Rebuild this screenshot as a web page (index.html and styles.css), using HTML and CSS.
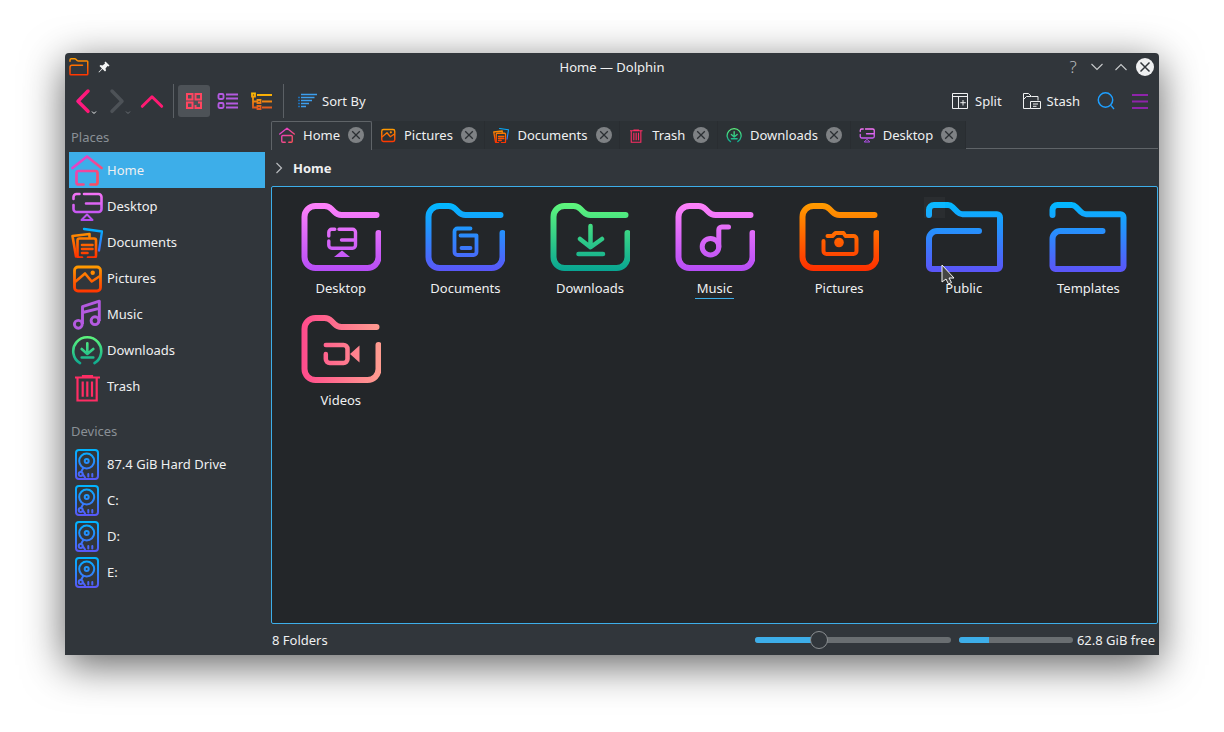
FILE: index.html
```html
<!DOCTYPE html>
<html lang="en">
<head>
<meta charset="utf-8">
<title>Home — Dolphin</title>
<link rel="stylesheet" href="styles.css">
</head>
<body>
<svg class="defs" xmlns="http://www.w3.org/2000/svg">
  <defs>
    <linearGradient id="fPink" gradientUnits="userSpaceOnUse" x1="0" y1="0" x2="0" y2="68"><stop offset="0" stop-color="#ff82fa"/><stop offset="1" stop-color="#b64df6"/></linearGradient>
    <linearGradient id="fBlue" gradientUnits="userSpaceOnUse" x1="0" y1="0" x2="0" y2="68"><stop offset="0" stop-color="#00baff"/><stop offset="1" stop-color="#5a56f8"/></linearGradient>
    <linearGradient id="fGreen" gradientUnits="userSpaceOnUse" x1="0" y1="0" x2="0" y2="68"><stop offset="0" stop-color="#5ff77c"/><stop offset="1" stop-color="#08a592"/></linearGradient>
    <linearGradient id="fOrange" gradientUnits="userSpaceOnUse" x1="0" y1="0" x2="0" y2="68"><stop offset="0" stop-color="#ff9c00"/><stop offset="1" stop-color="#ff2e00"/></linearGradient>
    <linearGradient id="fRose" gradientUnits="userSpaceOnUse" x1="0" y1="0" x2="80" y2="0"><stop offset="0" stop-color="#ff4b8c"/><stop offset="1" stop-color="#ff9d90"/></linearGradient>
    <linearGradient id="sHome" gradientUnits="userSpaceOnUse" x1="2" y1="4" x2="30" y2="30"><stop offset="0" stop-color="#e03fe0"/><stop offset="1" stop-color="#ff5050"/></linearGradient>
    <linearGradient id="sPink" gradientUnits="userSpaceOnUse" x1="0" y1="3" x2="0" y2="31"><stop offset="0" stop-color="#f573f5"/><stop offset="1" stop-color="#b24df0"/></linearGradient>
    <linearGradient id="sBlue" gradientUnits="userSpaceOnUse" x1="0" y1="2" x2="0" y2="32"><stop offset="0" stop-color="#00b4ff"/><stop offset="1" stop-color="#5a56f8"/></linearGradient>
    <linearGradient id="sOrange" gradientUnits="userSpaceOnUse" x1="0" y1="4" x2="0" y2="32"><stop offset="0" stop-color="#ff9c00"/><stop offset="1" stop-color="#ff2e00"/></linearGradient>
    <linearGradient id="sGreen" gradientUnits="userSpaceOnUse" x1="0" y1="2" x2="0" y2="32"><stop offset="0" stop-color="#5ff77c"/><stop offset="1" stop-color="#08a592"/></linearGradient>
    <linearGradient id="tOrange" gradientUnits="userSpaceOnUse" x1="0" y1="0" x2="0" y2="72"><stop offset="0" stop-color="#ff9c00"/><stop offset="1" stop-color="#ff2e00"/></linearGradient>
    <linearGradient id="tTree" gradientUnits="userSpaceOnUse" x1="0" y1="0" x2="0" y2="16"><stop offset="0" stop-color="#ffc400"/><stop offset="1" stop-color="#e2571e"/></linearGradient>
    <linearGradient id="tBack" gradientUnits="userSpaceOnUse" x1="0" y1="0" x2="28" y2="0"><stop offset="0" stop-color="#ff1f8f"/><stop offset="1" stop-color="#ff0f60"/></linearGradient>

    <path id="fold" d="M77 30V54a11 11 0 0 1-11 11H14A11 11 0 0 1 3 54V14A11 11 0 0 1 14 3h9c3 0 5 1 7 3l3 3c2 2 4 3 7 3h35"/>
    <path id="pub" d="M3 13V8a5 5 0 0 1 5-5H22c2 0 3 .5 4.500 2l5 5c1.500 1.500 3 2.200 5 2.200H71a3 3 0 0 1 3 3V64a3 3 0 0 1-3 3H6a3 3 0 0 1-3-3V37a8 8 0 0 1 8-8H53"/>

    <symbol id="i-home" viewBox="0 0 32 32">
      <path fill="none" stroke="url(#sHome)" stroke-width="2.700" stroke-linecap="round" stroke-linejoin="round" d="M1.500 14L16 2.500 30.500 14M5.500 19v9.500a2 2 0 0 0 2 2h5M5.500 19a2 2 0 0 1 2-2h17a2 2 0 0 1 2 2v9.500a2 2 0 0 1-2 2h-5"/>
    </symbol>
    <symbol id="i-desktop" viewBox="0 0 32 32">
      <path fill="none" stroke="url(#sPink)" stroke-width="2.600" stroke-linecap="round" d="M2.500 9V7a3 3 0 0 1 3-3h3M13 4H27.500a3 3 0 0 1 3 3V19a3 3 0 0 1-3 3H5.500a3 3 0 0 1-3-3V15M30 13.500H15"/>
      <path fill="none" stroke="url(#sPink)" stroke-width="2" stroke-linejoin="round" d="M16 24.500l-5.500 5.500h11z"/>
    </symbol>
    <symbol id="i-docs" viewBox="0 0 32 32">
      <path fill="none" stroke="url(#sBlue)" stroke-width="2.300" stroke-linecap="round" stroke-linejoin="round" d="M13 3l18 2.500-3 19"/>
      <path fill="none" stroke="url(#sOrange)" stroke-width="2.600" stroke-linecap="round" stroke-linejoin="round" d="M18.500 11V8L1.500 10l3.500 20.500"/>
      <path fill="none" stroke="url(#sOrange)" stroke-width="2.600" stroke-linecap="round" stroke-linejoin="round" d="M11 31.500H8.500a2 2 0 0 1-2-2V14.500a2 2 0 0 1 2-2H23a2 2 0 0 1 2 2V29.500a2 2 0 0 1-2 2H17M11 19H21.500M11 23H21.500M11 27H16.500"/>
    </symbol>
    <symbol id="i-pics" viewBox="0 0 32 32">
      <rect x="3.500" y="5" width="26" height="24" rx="3.500" fill="none" stroke="url(#sOrange)" stroke-width="2.800"/>
      <path fill="none" stroke="url(#sOrange)" stroke-width="2.600" stroke-linejoin="round" d="M4 20l10-8.500 6.700 8 8.300-5.500"/>
      <circle cx="21.700" cy="10.700" r="2.200" fill="#ff8a00"/>
    </symbol>
    <symbol id="i-music" viewBox="0 0 32 32">
      <g fill="none" stroke="#b45ae0" stroke-width="2.900" stroke-linejoin="round">
        <circle cx="7.300" cy="26.300" r="3.900"/><circle cx="24" cy="22.700" r="3.900"/>
        <path d="M11.500 26V8.700L28.300 3.200V23M11.500 14.500l16.800-4.200"/>
      </g>
    </symbol>
    <symbol id="i-down" viewBox="0 0 32 32">
      <path fill="none" stroke="url(#sGreen)" stroke-width="2.600" stroke-linecap="round" stroke-linejoin="round" d="M9 29.200A14 14 0 1 1 23.500 29.200M16.300 9.300V20M10.700 15l5.600 5 6-5M10.700 23.500H22.300"/>
    </symbol>
    <symbol id="i-trash" viewBox="0 0 32 32">
      <path fill="none" stroke="#ff2d64" stroke-width="2.200" d="M4 7.500H29M12 7.500V6h9v1.500M6.500 7.500V30.500H25.700V7.500M11.700 11.500V26.700M16.300 11.500V26.700M21 11.500V26.700"/>
    </symbol>
    <symbol id="i-hdd" viewBox="0 0 32 32">
      <g fill="none" stroke="url(#sBlue)" stroke-width="2" stroke-linecap="round">
        <path d="M8 2H24a3 3 0 0 1 3 3V28a3 3 0 0 1-3 3H8a3 3 0 0 1-3-3V5a3 3 0 0 1 3-3z"/>
        <circle cx="15.700" cy="13" r="7.500"/>
        <circle cx="15.700" cy="13" r="2"/>
        <circle cx="9.700" cy="26" r="2"/>
        <path d="M10 24l2-3.500M12 26.500l2 3M17.300 26v2.500M21.300 26v2.500"/>
      </g>
    </symbol>
    <symbol id="i-x" viewBox="0 0 16 16">
      <circle cx="8" cy="8" r="8" fill="#7e8184"/>
      <path d="M4.200 4.200l7.600 7.600M11.800 4.200l-7.600 7.600" stroke="#2b2f33" stroke-width="1.300"/>
    </symbol>
  </defs>
</svg>

<div class="window">
  <header class="titlebar">
    <div class="tb-left">
      <svg class="t-folder" width="20" height="18" viewBox="0 0 78 72"><use href="#pub" fill="none" stroke="url(#tOrange)" stroke-width="6" stroke-linecap="round" stroke-linejoin="round"/></svg>
      <svg class="t-pin" width="12" height="12" viewBox="0 0 12 12"><path fill="#f4f5f5" d="M7.500.5l4 4-1 1-1-.5-2 2.500.5 2-1 1L4.500 8 1 11.500.5 11 4 7.500 1.500 5l1-1 2 .5L7 2.500l-.5-1z"/></svg>
    </div>
    <div class="tb-title">Home — Dolphin</div>
    <div class="tb-right">
      <span class="tb-help">?</span>
      <svg width="12" height="8" viewBox="0 0 12 8"><path d="M.5 1l5.500 5.500L11.500 1" fill="none" stroke="#c8cacc" stroke-width="1.100"/></svg>
      <svg width="12" height="8" viewBox="0 0 12 8"><path d="M.5 7L6 1.500 11.500 7" fill="none" stroke="#c8cacc" stroke-width="1.100"/></svg>
      <svg width="18" height="18" viewBox="0 0 18 18"><circle cx="9" cy="9" r="9" fill="#eff0f1"/><path d="M4.500 4.500l9 9M13.500 4.500l-9 9" stroke="#31363b" stroke-width="1.500"/></svg>
    </div>
  </header>

  <div class="toolbar">
    <svg class="tool-nav" width="28" height="28" viewBox="0 0 28 28"><path d="M16 4L6 14.300 16 24.300" fill="none" stroke="url(#tBack)" stroke-width="3.500" stroke-linecap="round" stroke-linejoin="round"/><path d="M20 24.500l2 2 2-2" fill="none" stroke="#eff0f1" stroke-width="1"/></svg>
    <svg class="tool-fwd" width="28" height="28" viewBox="0 0 28 28"><path d="M6 4L16 14.300 6 24.300" fill="none" stroke="#4d5257" stroke-width="3.500" stroke-linecap="round" stroke-linejoin="round"/><path d="M20 24.500l2 2 2-2" fill="none" stroke="#6b7075" stroke-width="1"/></svg>
    <svg class="tool-up" width="28" height="28" viewBox="0 0 28 28"><path d="M4.300 19.300L14 9.800l9.700 9.500" fill="none" stroke="#ff1a72" stroke-width="3" stroke-linecap="round" stroke-linejoin="round"/></svg>
    <span class="tool-sep"></span>
    <span class="view-btn is-on">
      <svg width="18" height="18" viewBox="0 0 18 18"><path fill="none" stroke="#ff4560" stroke-width="2" d="M2 2h5.500v5.500H2zM10.500 2H16v5.500h-5.500zM2 10.500h5.500V16H2zM13 10.500h3V16h-5.500v-3"/></svg>
    </span>
    <span class="view-btn">
      <svg width="22" height="18" viewBox="0 0 22 18"><rect x="1.500" y="2" width="5" height="5" rx="1.200" fill="none" stroke="#b45ae0" stroke-width="1.900"/><rect x="1.500" y="11" width="5" height="5" rx="1.200" fill="none" stroke="#b45ae0" stroke-width="1.900"/><path fill="none" stroke="#b45ae0" stroke-width="1.900" d="M9 2.500h12M9 6.500h12M9 11.500h12M9 15.500h12"/></svg>
    </span>
    <span class="view-btn">
      <svg width="22" height="18" viewBox="0 0 22 18"><path fill="none" stroke="url(#tTree)" stroke-width="1.800" d="M2 5V15.500H6M2 9.500H6M1 1.500h3v3H1zM6.500 8h3v3h-3zM6.500 14h3v3h-3zM6 3h15M11 9.500h10M11 15.500h10"/></svg>
    </span>
    <span class="tool-sep sep2"></span>
    <span class="tool-btn sort">
      <svg width="19" height="16" viewBox="0 0 19 16"><path fill="none" stroke="#3d9fee" stroke-width="1.500" d="M3 1.500h16M3 4.500h13.500M3 7.500h11M3 10.500h8M3 13.500h5"/><path fill="none" stroke="#1f6fb5" stroke-width="1.500" d="M0 4.500h2M0 7.500h2M0 10.500h2M0 13.500h2"/></svg>
      Sort By
    </span>
    <span class="tool-btn split">
      <svg width="16" height="16" viewBox="0 0 16 16"><path fill="none" stroke="#eff0f1" d="M.5.500h15v15H.5zM.5 3.500h15M6.500 3.500v12M11 7v5.500M8.300 9.700h5.500"/></svg>
      Split
    </span>
    <span class="tool-btn stash">
      <svg width="18" height="16" viewBox="0 0 18 16"><path fill="none" stroke="#eff0f1" d="M.5 15.500V.500h5l3 3h6.500v4M.5 6.500l3-3H8M7.500 15.500H.5M7.500 8.500h10v7h-10zM10 11h5M10 13.300h3.500"/></svg>
      Stash
    </span>
    <svg class="tool-search" width="18" height="18" viewBox="0 0 18 18"><circle cx="8.500" cy="8" r="7.200" fill="none" stroke="#1e9fff" stroke-width="1.500"/><path d="M14 13.500l3 3.500" stroke="#1e9fff" stroke-width="1.300"/></svg>
    <svg class="tool-menu" width="16" height="16" viewBox="0 0 16 16"><path d="M0 2h16M0 8.500h16M0 15h16" stroke="#8e24aa" stroke-width="2"/></svg>
  </div>

  <div class="body">
    <aside class="sidebar">
      <div class="side-head">Places</div>
      <div class="side-row is-active"><svg class="side-ic"><use href="#i-home"/></svg>Home</div>
      <div class="side-row"><svg class="side-ic"><use href="#i-desktop"/></svg>Desktop</div>
      <div class="side-row"><svg class="side-ic"><use href="#i-docs"/></svg>Documents</div>
      <div class="side-row"><svg class="side-ic"><use href="#i-pics"/></svg>Pictures</div>
      <div class="side-row"><svg class="side-ic"><use href="#i-music"/></svg>Music</div>
      <div class="side-row"><svg class="side-ic"><use href="#i-down"/></svg>Downloads</div>
      <div class="side-row"><svg class="side-ic"><use href="#i-trash"/></svg>Trash</div>
      <div class="side-head devices">Devices</div>
      <div class="side-row"><svg class="side-ic"><use href="#i-hdd"/></svg>87.4 GiB Hard Drive</div>
      <div class="side-row"><svg class="side-ic"><use href="#i-hdd"/></svg>C:</div>
      <div class="side-row"><svg class="side-ic"><use href="#i-hdd"/></svg>D:</div>
      <div class="side-row"><svg class="side-ic"><use href="#i-hdd"/></svg>E:</div>
    </aside>

    <main class="main">
      <div class="tabs">
        <div class="tab is-active"><svg class="tab-ic"><use href="#i-home"/></svg>Home<svg class="tab-x"><use href="#i-x"/></svg></div>
        <div class="tab"><svg class="tab-ic"><use href="#i-pics"/></svg>Pictures<svg class="tab-x"><use href="#i-x"/></svg></div>
        <div class="tab"><svg class="tab-ic"><use href="#i-docs"/></svg>Documents<svg class="tab-x"><use href="#i-x"/></svg></div>
        <div class="tab"><svg class="tab-ic"><use href="#i-trash"/></svg>Trash<svg class="tab-x"><use href="#i-x"/></svg></div>
        <div class="tab"><svg class="tab-ic"><use href="#i-down"/></svg>Downloads<svg class="tab-x"><use href="#i-x"/></svg></div>
        <div class="tab"><svg class="tab-ic"><use href="#i-desktop"/></svg>Desktop<svg class="tab-x"><use href="#i-x"/></svg></div>
      </div>

      <div class="crumb">
        <svg width="8" height="12" viewBox="0 0 8 12"><path d="M1.500 1l5 5-5 5" fill="none" stroke="#b9bcbf" stroke-width="1.200"/></svg>
        <strong>Home</strong>
      </div>

      <div class="view">
        <div class="grid">
          <div class="item">
            <svg class="folder" viewBox="-0.500 -6 80 80"><g fill="none" stroke="url(#fPink)" stroke-linecap="round" stroke-linejoin="round"><use href="#fold" stroke-width="6"/><path stroke-width="3.400" d="M27.300 33V29.300a3 3 0 0 1 3-3h3M37.500 26.300H51a3 3 0 0 1 3 3V42.300a3 3 0 0 1-3 3H30.300a3 3 0 0 1-3-3V38M53 37H40"/></g><path fill="url(#fPink)" d="M40.500 47.500l-8 6.500h16z"/></svg>
            <span class="label">Desktop</span>
          </div>
          <div class="item">
            <svg class="folder" viewBox="-0.500 -6 80 80"><g fill="none" stroke="url(#fBlue)" stroke-linecap="round" stroke-linejoin="round"><use href="#fold" stroke-width="6"/><path stroke-width="3.800" d="M45 25.500H32a3 3 0 0 0-3 3V49a3 3 0 0 0 3 3H48a3 3 0 0 0 3-3V32.500H35M36 45h9"/></g></svg>
            <span class="label">Documents</span>
          </div>
          <div class="item">
            <svg class="folder" viewBox="-0.500 -6 80 80"><g fill="none" stroke="url(#fGreen)" stroke-linecap="round" stroke-linejoin="round"><use href="#fold" stroke-width="6"/><path stroke-width="4.500" d="M40 23V43.500M29.500 36L40 44.300 51.500 36M28 51H52.500"/></g></svg>
            <span class="label">Downloads</span>
          </div>
          <div class="item">
            <svg class="folder" viewBox="-0.500 -6 80 80"><g fill="none" stroke="url(#fPink)" stroke-linecap="round" stroke-linejoin="round"><use href="#fold" stroke-width="6"/><circle cx="35" cy="43.700" r="8.300" stroke-width="5"/><path stroke-width="5" d="M43.300 43.700V27a3 3 0 0 1 3-3H53"/></g></svg>
            <span class="label is-current">Music</span>
          </div>
          <div class="item">
            <svg class="folder" viewBox="-0.500 -6 80 80"><g fill="none" stroke="url(#fOrange)" stroke-linecap="round" stroke-linejoin="round"><use href="#fold" stroke-width="6"/><path stroke-width="4" d="M24 38v10a3 3 0 0 0 3 3H54a3 3 0 0 0 3-3V36a3 3 0 0 0-3-3H46l-2-3H36l-3 3H28"/></g><circle cx="39.500" cy="39.500" r="4.800" fill="url(#fOrange)"/></svg>
            <span class="label">Pictures</span>
          </div>
          <div class="item">
            <svg class="folder" viewBox="-2 -5 80 80"><use href="#pub" fill="none" stroke="url(#fBlue)" stroke-width="6" stroke-linecap="round" stroke-linejoin="round"/></svg>
            <span class="label">Public</span>
          </div>
          <div class="item">
            <svg class="folder" viewBox="-1.500 -5 80 80"><use href="#pub" fill="none" stroke="url(#fBlue)" stroke-width="6" stroke-linecap="round" stroke-linejoin="round"/></svg>
            <span class="label">Templates</span>
          </div>
          <div class="item">
            <svg class="folder" viewBox="-0.500 -6 80 80"><g fill="none" stroke="url(#fRose)" stroke-linecap="round" stroke-linejoin="round"><use href="#fold" stroke-width="6"/><path stroke-width="4.500" d="M24.300 30H42a4 4 0 0 1 4 4V44a4 4 0 0 1-4 4H28.300a4 4 0 0 1-4-4V39"/></g><path fill="url(#fRose)" d="M48.500 39L58 30.500V47.500z"/></svg>
            <span class="label">Videos</span>
          </div>
        </div>
        <span class="hover-mark"></span>
        <svg class="cursor" width="14" height="22" viewBox="0 0 14 22"><path d="M1 1V18l4-3 2.500 5 3-1.500L8 14h5z" fill="#454545" stroke="#f4f4f4" stroke-width="1"/></svg>
      </div>

      <div class="status">
        <span class="status-text">8 Folders</span>
        <div class="status-right">
          <div class="slider"><span class="slider-fill"></span><span class="slider-knob"></span></div>
          <div class="meter"><span class="meter-fill"></span></div>
          <span class="free">62.8 GiB free</span>
        </div>
      </div>
    </main>
  </div>
</div>
</body>
</html>
```

FILE: styles.css
```css
* { box-sizing: border-box; }
html, body { height: 100%; }
body {
  margin: 0;
  padding: 53px 0 0 65px;
  background: #fff;
  font-family: "Noto Sans", sans-serif;
  font-size: 13px;
  line-height: 18px;
  color: #eff0f1;
  overflow: hidden;
}
.defs { display: block; width: 0; height: 0; }
svg { display: block; flex: none; }

.window {
  width: 1094px;
  height: 602px;
  background: #31363b;
  border-radius: 4px 4px 0 0;
  box-shadow: 0 10px 42px rgba(0, 0, 0, .62);
  display: flex;
  flex-direction: column;
}

/* title bar */
.titlebar {
  height: 30px;
  flex: none;
  padding-bottom: 2px;
  display: grid;
  grid-template-columns: 1fr auto 1fr;
  align-items: center;
}
.tb-left { display: flex; align-items: center; padding-left: 4px; gap: 9px; }
.tb-title { text-align: center; }
.tb-right { display: flex; align-items: center; justify-content: flex-end; padding-right: 5px; gap: 12px; }
.tb-right > :last-child { margin-left: -3px; }
.tb-help { font-size: 17px; font-weight: 300; color: #b9bcbf; width: 12px; text-align: center; }

/* tool bar */
.toolbar {
  height: 36px;
  flex: none;
  display: flex;
  align-items: center;
  padding-left: 7px;
  padding-right: 11px;
}
.tool-fwd { margin-left: 6px; }
.tool-up { margin-left: 4px; }
.tool-sep { width: 1px; height: 34px; background: #5b6065; margin-left: 7px; }
.view-btn {
  width: 32px;
  height: 32px;
  display: flex;
  align-items: center;
  justify-content: center;
  border-radius: 3px;
  margin-left: 2px;
}
.tool-sep + .view-btn { margin-left: 4px; }
.view-btn.is-on { background: #4d5257; }
.sep2 { margin-left: 5px; }
.tool-btn { display: flex; align-items: center; gap: 6px; }
.sort { margin-left: 14px; gap: 5px; }
.split { margin-left: auto; gap: 7px; }
.stash { margin-left: 21px; }
.tool-search { margin-left: 17px; }
.tool-menu { margin-left: 17px; }

/* body */
.body { flex: 1; min-height: 0; display: flex; }

.sidebar { width: 200px; flex: none; padding: 9px 0 0 4px; }
.side-head { color: #8a9096; height: 18px; margin-bottom: 6px; padding-left: 2px; }
.side-head.devices { margin-top: 18px; }
.side-row {
  height: 36px;
  display: flex;
  align-items: center;
  gap: 4px;
  padding-left: 2px;
}
.side-row.is-active { background: #3daee9; }
.side-ic { width: 32px; height: 32px; }

.main { flex: 1; min-width: 0; display: flex; flex-direction: column; margin: 0 1px 0 6px; }

/* tabs */
.tabs {
  height: 30px;
  flex: none;
  padding-top: 2px;
  display: flex;
  border-bottom: 1px solid #5f6468;
}
.tab {
  height: 28px;
  display: flex;
  align-items: center;
  gap: 8px;
  padding: 0 7.6px 0 8px;
  background: #2c3135;
  border-right: 1px solid #292d31;
  white-space: nowrap;
}
.tab.is-active {
  height: 29px;
  background: #31363b;
  border: 1px solid #5f6468;
  border-bottom: 0;
  border-radius: 2px 2px 0 0;
  padding: 0 7px 3px;
}
.tab-ic { width: 16px; height: 16px; }
.tab-x { width: 16px; height: 16px; }

.crumb {
  height: 37px;
  flex: none;
  display: flex;
  align-items: center;
  gap: 10px;
  padding-left: 4px;
}
.crumb strong { font-weight: 700; }

/* view */
.view {
  flex: 1;
  min-height: 0;
  position: relative;
  background: #232629;
  border: 1px solid #3daee9;
  border-radius: 2px;
  padding: 10px 0 0 6.5px;
}
.grid {
  display: grid;
  grid-template-columns: repeat(7, 124.6px);
  grid-auto-rows: 112px;
}
.item { display: flex; flex-direction: column; align-items: center; }
.folder { width: 80px; height: 80px; }
.label { margin-top: 2px; height: 20px; padding: 0 2px; border-bottom: 1px solid transparent; }
.label.is-current { border-bottom-color: #3daee9; }
.hover-mark { position: absolute; left: 652px; top: 10px; width: 21px; height: 21px; background: rgba(255, 255, 255, .035); }
.cursor { position: absolute; left: 669px; top: 77px; }

/* status */
.status {
  height: 31px;
  flex: none;
  display: flex;
  align-items: center;
  justify-content: space-between;
  padding: 1px 3px 0 1px;
}
.status-right { display: flex; align-items: center; }
.slider { position: relative; width: 196px; height: 6px; border-radius: 3px; background: #696e71; }
.slider-fill { position: absolute; left: 0; top: 0; bottom: 0; width: 64px; background: #3daee9; border-radius: 3px 0 0 3px; }
.slider-knob {
  position: absolute;
  left: 55px;
  top: -6px;
  width: 18px;
  height: 18px;
  border-radius: 50%;
  background: #31363b;
  border: 1px solid #8a8e91;
}
.meter { width: 114px; height: 6px; margin-left: 8px; border-radius: 3px; background: #696e71; overflow: hidden; }
.meter-fill { display: block; width: 30px; height: 100%; background: #3daee9; }
.free { margin-left: 4px; }
```
